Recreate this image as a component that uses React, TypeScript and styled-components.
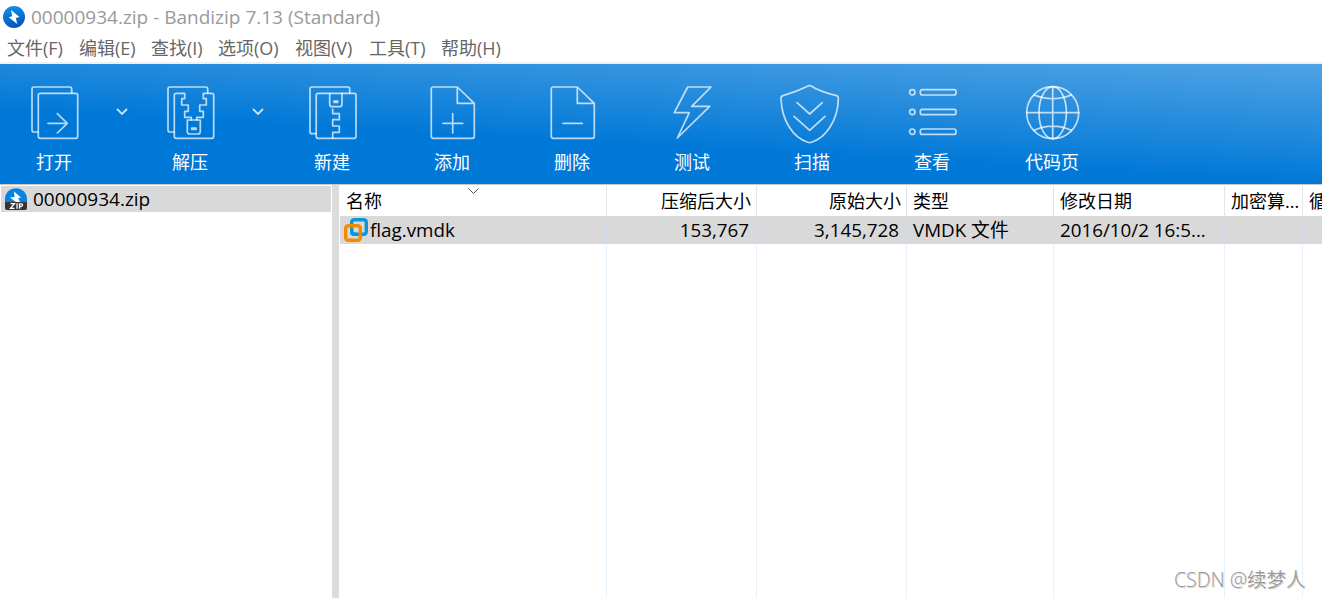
import React from "react";
import styled, { createGlobalStyle } from "styled-components";

const Global = createGlobalStyle`
  * { box-sizing: border-box; }
  html, body { margin: 0; padding: 0; background: #fff; overflow: hidden; }
  body { font-family: "Open Sans", "Noto Sans CJK SC", sans-serif; font-size: 18px; color: #000; }
`;

const Window = styled.div`
  position: relative;
  width: 1322px;
  height: 598px;
  display: flex;
  flex-direction: column;
  overflow: hidden;
  background: #fff;
`;

const TitleBar = styled.header`
  height: 34px;
  flex: none;
  display: flex;
  align-items: center;
  gap: 6px;
  padding-left: 3px;
  color: #999;
`;

const Label = styled.span<{ $size?: number; $spacing?: number }>`
  font-size: ${(p) => p.$size ?? 18}px;
  letter-spacing: ${(p) => p.$spacing ?? 0}px;
  line-height: 28px;
  white-space: pre;
`;

const MenuBar = styled.nav`
  height: 30px;
  flex: none;
  display: flex;
  padding-left: 7px;
  border-bottom: 2px solid #f0f0f0;
  color: #666;
`;

const MenuItem = styled.div<{ $width: number }>`
  width: ${(p) => p.$width}px;
  flex: none;
  line-height: 28px;
  white-space: nowrap;
`;

const Toolbar = styled.div`
  height: 121px;
  flex: none;
  display: flex;
  border-bottom: 1px solid #c8c8c8;
  background: linear-gradient(3.2deg, #0078d7 38%, #50a3e4 100%);
  color: #fff;
`;

const ToolButton = styled.div<{ $width?: number }>`
  width: ${(p) => p.$width ?? 120}px;
  flex: none;
  display: flex;
  flex-direction: column;
  align-items: center;
  padding-top: 20px;
  line-height: 26px;
`;

const ToolIcon = styled.svg`
  width: 60px;
  height: 60px;
  overflow: visible;
  fill: none;
  stroke: #fff;
  stroke-opacity: 0.72;
  stroke-width: 1.7;
  stroke-linejoin: round;
  stroke-linecap: round;
  margin-bottom: 5px;
`;

const DropArrow = styled.svg`
  width: 28px;
  height: 12px;
  flex: none;
  margin-top: 42px;
  fill: none;
  stroke: #fff;
  stroke-opacity: 0.8;
  stroke-width: 1.8;
`;

const Main = styled.main`
  flex: 1;
  display: flex;
  min-height: 0;
`;

const Tree = styled.aside`
  width: 332px;
  flex: none;
  padding: 1px 1px 0;
`;

const TreeRow = styled.div`
  height: 26px;
  display: flex;
  align-items: center;
  gap: 6px;
  padding-left: 3px;
  background: #d9d9d9;
`;

const Splitter = styled.div`
  width: 7px;
  flex: none;
  background: #dcdcdc;
`;

const Table = styled.section`
  flex: 1;
  min-width: 0;
  display: flex;
  padding: 1px 0 0 1px;
  overflow: hidden;
`;

const Column = styled.div<{ $width: number }>`
  width: ${(p) => p.$width}px;
  flex: none;
  display: flex;
  flex-direction: column;
`;

const HeadCell = styled.div<{ $right?: boolean }>`
  position: relative;
  height: 30px;
  flex: none;
  padding: 1px 5px 0 6px;
  border-right: 1px solid #e5e5e5;
  text-align: ${(p) => (p.$right ? "right" : "left")};
  line-height: 28px;
  white-space: nowrap;
`;

const Cell = styled.div<{ $right?: boolean; $icon?: boolean }>`
  height: 28px;
  flex: none;
  display: flex;
  align-items: center;
  justify-content: ${(p) => (p.$right ? "flex-end" : "flex-start")};
  gap: 2px;
  padding: 0 7px 0 ${(p) => (p.$icon ? 4 : 6)}px;
  border-right: 1px solid #cfdbe8;
  background: #d9d9d9;
`;

const ColumnRest = styled.div`
  flex: 1;
  border-right: 1px solid #e6f1fb;
`;

const SortMark = styled.svg`
  position: absolute;
  left: 128px;
  top: 1px;
  width: 12px;
  height: 8px;
  fill: none;
  stroke: #555;
`;

const Watermark = styled.div`
  position: absolute;
  left: 1174px;
  top: 567px;
  font-size: 19.5px;
  font-weight: 350;
  line-height: 26px;
  color: #989898;
  text-shadow: -1px -1px 0 #fff, 1px 1px 1px #ccc;
  white-space: nowrap;
`;

const BandizipLogo = () => (
  <svg width="22" height="22" viewBox="0 0 22 22">
    <defs>
      <linearGradient id="logo" x1="0" y1="0" x2="0.3" y2="1">
        <stop offset="0" stopColor="#1596e6" />
        <stop offset="1" stopColor="#0356c4" />
      </linearGradient>
    </defs>
    <circle cx="11" cy="11" r="11" fill="url(#logo)" />
    <path d="M8 4L16.5 11L12.8 12L14.3 18L5.7 11.2L9.3 10.2Z" fill="#fff" />
  </svg>
);

const ZipIcon = () => (
  <svg width="23" height="23" viewBox="0 0 23 23">
    <path d="M1 14V11A11 10.8 0 0 1 23 11V14Z" fill="#0a82de" />
    <path d="M10 3.5L17 9.5L14.2 10.3L16 14H12L6 9.5L10.6 9Z" fill="#fff" />
    <path d="M1 14H23V20Q23 22 21 22H3Q1 22 1 20Z" fill="#353535" />
    <path d="M6.5 15.7H10.5L6.5 20.3H10.5M13 15.2V20.8M15.5 20.8V15.8H17.4Q18.8 15.8 18.5 17.2T16.6 18.5H15.5" fill="none" stroke="#fff" strokeWidth="1.3" />
  </svg>
);

const VmdkIcon = () => (
  <svg width="24" height="24" viewBox="0 0 24 24" fill="none" strokeWidth="3.4">
    <rect x="7.7" y="1.7" width="14.6" height="14.6" rx="2.5" stroke="#0c96d5" />
    <rect x="1.7" y="7.7" width="14.6" height="14.6" rx="2.5" stroke="#f38b00" />
    <path d="M7.7 12V13.8Q7.7 16.3 10.2 16.3H13" stroke="#0c96d5" />
  </svg>
);

const backSheet = "M14 48H10Q8 48 8 46V5Q8 3 10 3H45.7Q47.7 3 47.7 5V9";
const page = "M11.3 3H35.3L52.3 19.3V52.3Q52.3 54.3 50.3 54.3H11.3Q9.3 54.3 9.3 52.3V5Q9.3 3 11.3 3M35.3 3V19.3H52.3";

type Tool = { label: string; icon: React.ReactNode; drop?: boolean };

const tools: Tool[] = [
  {
    label: "打开",
    drop: true,
    icon: (
      <>
        <path d={backSheet} />
        <rect x="14.3" y="9.3" width="39.4" height="45" rx="2" />
        <path d="M24 39.3H43.3M33.3 29.7L43.3 39.3L33.3 49" />
      </>
    ),
  },
  {
    label: "解压",
    drop: true,
    icon: (
      <>
        <path d={backSheet} />
        <path d="M31.3 36V33.3H24.7V27.3H28.3V21H21.7V14.7H24.7V9.3H16.3Q14.3 9.3 14.3 11.3V52.3Q14.3 54.3 16.3 54.3H51.7Q53.7 54.3 53.7 52.3V11.3Q53.7 9.3 51.7 9.3H43.3V14.7H46.3V21H39.7V27.3H43.3V33.3H36.7V36" />
        <path d="M27.3 36H40.3V47.5Q40.3 50 37.8 50H29.8Q27.3 50 27.3 47.5Z" />
        <rect x="31.7" y="44" width="4.3" height="1.3" />
      </>
    ),
  },
  {
    label: "新建",
    icon: (
      <>
        <path d="M14 49.7H10Q8 49.7 8 47.7V5Q8 3 10 3H45.7Q47.7 3 47.7 5V9" />
        <rect x="14.2" y="9.3" width="39.8" height="45" rx="2" />
        <path d="M27.7 9.3V20.2Q27.7 22.7 30.2 22.7H37.5Q40 22.7 40 20.2V9.3M30.7 25V29.7H37.3V35.7H30.7V42H37.3V48.3H30.7V54" />
        <rect x="32" y="17" width="3.7" height="1.3" />
      </>
    ),
  },
  { label: "添加", icon: <path d={page + "M21 39.3H40.7M30.7 29.7V49"} /> },
  { label: "删除", icon: <path d={page + "M21 39.3H40.3"} /> },
  { label: "测试", icon: <path d="M25.7 3H49L29.7 22.3H47.7L15.3 54L27.3 28.7H12.3Z" /> },
  {
    label: "扫描",
    icon: (
      <>
        <path d="M26.2 2Q27.7 1.3 29.2 2C35 6 45 9.3 54.5 11.6Q56.5 12.2 56.4 14.2C56 36 44 54 29.5 58.2Q27.7 58.9 25.9 58.2C11 54-.5 36-1 14.2Q-1.1 12.2 1 11.6C10 9 20 5 26.2 2Z" />
        <path d="M15 18.7L27.7 30L40.3 18.7M12 32.3L27.7 46.3L43 32.3" />
      </>
    ),
  },
  {
    label: "查看",
    icon: (
      <>
        {[8.3, 28, 47.7].map((y) => (
          <g key={y}>
            <circle cx="10.3" cy={y} r="2.7" />
            <rect x="18.3" y={y - 2.7} width="35.7" height="5.4" rx="2" />
          </g>
        ))}
      </>
    ),
  },
  {
    label: "代码页",
    icon: (
      <>
        <circle cx="30.7" cy="28.7" r="26" />
        <ellipse cx="30.7" cy="28.7" rx="13.7" ry="26" />
        <path d="M4.7 28.7H56.7M30.7 2.7V54.7M12 11Q30.7 18.5 49.4 11M12 46.3Q30.7 37.8 49.4 46.3" />
      </>
    ),
  },
];

const menus: [string, number][] = [
  ["文件(F)", 72],
  ["编辑(E)", 72],
  ["查找(I)", 67],
  ["选项(O)", 77],
  ["视图(V)", 74],
  ["工具(T)", 72],
  ["帮助(H)", 70],
];

type Col = { head: string; width: number; value?: string; right?: boolean; name?: boolean };

const columns: Col[] = [
  { head: "名称", width: 267, value: "flag.vmdk", name: true },
  { head: "压缩后大小", width: 150, value: "153,767", right: true },
  { head: "原始大小", width: 150, value: "3,145,728", right: true },
  { head: "类型", width: 147, value: "VMDK 文件" },
  { head: "修改日期", width: 171, value: "2016/10/2 16:5..." },
  { head: "加密算...", width: 78 },
  { head: "循", width: 100 },
];

export default function App() {
  return (
    <Window>
      <Global />
      <TitleBar>
        <BandizipLogo />
        <Label $size={19}>00000934.zip - Bandizip 7.13 (Standard)</Label>
      </TitleBar>
      <MenuBar>
        {menus.map(([text, width]) => (
          <MenuItem key={text} $width={width}>{text}</MenuItem>
        ))}
      </MenuBar>
      <Toolbar>
        {tools.map((t) => (
          <React.Fragment key={t.label}>
            <ToolButton $width={t.drop ? 108 : 120}>
              <ToolIcon viewBox="0 0 60 60">{t.icon}</ToolIcon>
              {t.label}
            </ToolButton>
            {t.drop && (
              <DropArrow viewBox="0 0 28 12">
                <path d="M9 3L14 8L19 3" />
              </DropArrow>
            )}
          </React.Fragment>
        ))}
      </Toolbar>
      <Main>
        <Tree>
          <TreeRow>
            <ZipIcon />
            <Label $size={19}>00000934.zip</Label>
          </TreeRow>
        </Tree>
        <Splitter />
        <Table>
          {columns.map((c) => (
            <Column key={c.head} $width={c.width}>
              <HeadCell $right={c.right}>
                {c.head}
                {c.name && (
                  <SortMark viewBox="0 0 12 8">
                    <path d="M.5 1.5L5.5 6.5L10.5 1.5" />
                  </SortMark>
                )}
              </HeadCell>
              <Cell $right={c.right} $icon={c.name}>
                {c.name && <VmdkIcon />}
                <Label $size={18.8}>{c.value}</Label>
              </Cell>
              <ColumnRest />
            </Column>
          ))}
        </Table>
      </Main>
      <Watermark>CSDN @续梦人</Watermark>
    </Window>
  );
}
